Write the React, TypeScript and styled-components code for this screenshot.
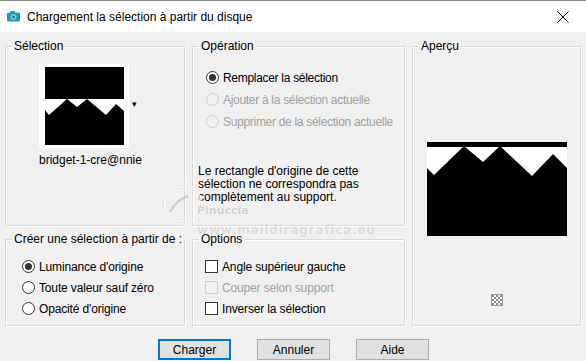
import React from 'react'
import styled, { createGlobalStyle, css } from 'styled-components'

const GlobalStyle = createGlobalStyle`
  html, body {
    margin: 0;
    padding: 0;
    background: #f0f0f0;
  }
  body {
    font-family: 'Liberation Sans', Arial, sans-serif;
    font-size: 12px;
    color: #000;
  }
`

export default function App() {
  return (
    <>
      <GlobalStyle />
      <Window>
        <TitleBar>
          <TitleIcon />
          <TitleText>Chargement la sélection à partir du disque</TitleText>
          <CloseButton>
            <svg width="12" height="12" viewBox="0 0 12 12">
              <path d="M0.5 0.5 L11.5 11.5 M11.5 0.5 L0.5 11.5" stroke="#000" strokeWidth="1" />
            </svg>
          </CloseButton>
        </TitleBar>

        <Body>
          <Groups>
            <Group>
              <Legend>Sélection</Legend>
              <SelectionContent>
                <ThumbRow>
                  <Thumb />
                  <DropArrow>▾</DropArrow>
                </ThumbRow>
                <ThumbName>bridget-1-cre@nnie</ThumbName>
              </SelectionContent>
            </Group>

            <Group>
              <Legend>Opération</Legend>
              <OptionList $left={13} $top={24} $gap={9} $tight>
                <Radio checked label="Remplacer la sélection" />
                <Radio disabled label="Ajouter à la sélection actuelle" />
                <Radio disabled label="Supprimer de la sélection actuelle" />
              </OptionList>
              <Note>
                Le rectangle d'origine de cette
                <br />
                sélection ne correspondra pas
                <br />
                complètement au support.
              </Note>
            </Group>

            <PreviewGroup>
              <Legend>Aperçu</Legend>
              <PreviewArea>
                <Preview />
              </PreviewArea>
              <CheckerIcon />
            </PreviewGroup>

            <Group>
              <Legend>Créer une sélection à partir de :</Legend>
              <OptionList $left={16} $top={20} $gap={8}>
                <Radio checked label="Luminance d'origine" />
                <Radio label="Toute valeur sauf zéro" />
                <Radio label="Opacité d'origine" />
              </OptionList>
            </Group>

            <Group>
              <Legend>Options</Legend>
              <OptionList $left={12} $top={20} $gap={8}>
                <Check label="Angle supérieur gauche" />
                <Check disabled label="Couper selon support" />
                <Check label="Inverser la sélection" />
              </OptionList>
            </Group>
          </Groups>

          <Buttons>
            <Button $default>Charger</Button>
            <Button>Annuler</Button>
            <Button>Aide</Button>
          </Buttons>
        </Body>

        <Watermark>
          <WatermarkLogo />
          <WatermarkName>Pinuccia</WatermarkName>
          <WatermarkSite>www.maildiragrafica.eu</WatermarkSite>
        </Watermark>
      </Window>
    </>
  )
}

const Radio = ({ label, checked, disabled }: { label: string; checked?: boolean; disabled?: boolean }) => (
  <OptionRow $disabled={disabled}>
    <RadioDot $checked={checked} $disabled={disabled} />
    <span>{label}</span>
  </OptionRow>
)

const Check = ({ label, disabled }: { label: string; disabled?: boolean }) => (
  <OptionRow $disabled={disabled}>
    <CheckBox $disabled={disabled} />
    <span>{label}</span>
  </OptionRow>
)

const TitleIcon = () => (
  <svg width="13" height="11" viewBox="0 0 13 11">
    <rect x="0" y="1.5" width="13" height="9" rx="1.5" fill="#1c9fb8" />
    <rect x="3" y="0" width="5" height="3" rx="1" fill="#1c9fb8" />
    <circle cx="6.5" cy="6" r="2.8" fill="#7fd6e6" />
    <circle cx="6.5" cy="6" r="1.5" fill="#1a7f93" />
  </svg>
)

const Thumb = () => (
  <svg width="90" height="84" viewBox="0 0 90 84">
    <rect width="90" height="84" fill="#fff" />
    <rect x="6" y="3" width="79" height="32" fill="#000" />
    <polygon
      points="6,46 10,51 28,35 38,43 48,35 67,51 77,40 85,47 85,81 6,81"
      fill="#000"
    />
  </svg>
)

const Preview = () => (
  <svg width="140" height="94" viewBox="0 0 140 94">
    <rect width="140" height="94" fill="#fff" />
    <rect x="0" y="0" width="140" height="5" fill="#000" />
    <polygon
      points="0,26 7,33 37,4 56,20 73,4 105,34 126,12 140,26 140,94 0,94"
      fill="#000"
    />
  </svg>
)

const CheckerIcon = () => (
  <CheckerBox>
    <svg width="12" height="12" viewBox="0 0 12 12">
      <rect x="0.5" y="0.5" width="11" height="11" fill="#fff" stroke="#9a9a9a" />
      {[0, 1, 2, 3, 4].map((r) =>
        [0, 1, 2, 3, 4].map((c) =>
          (r + c) % 2 === 0 ? <rect key={`${r}-${c}`} x={1 + c * 2} y={1 + r * 2} width="2" height="2" fill="#8a8a8a" /> : null
        )
      )}
    </svg>
  </CheckerBox>
)

const WatermarkLogo = () => (
  <LogoSvg width="44" height="44" viewBox="0 0 44 44">
    <circle cx="22" cy="22" r="19" fill="none" stroke="rgba(255,255,255,0.75)" strokeWidth="3" />
    <circle cx="22" cy="22" r="19" fill="none" stroke="rgba(150,150,150,0.3)" strokeWidth="1" />
    <path d="M10 30 Q16 18 28 14" fill="none" stroke="rgba(150,150,150,0.4)" strokeWidth="2" />
  </LogoSvg>
)

const Window = styled.div`
  position: relative;
  width: 586px;
  height: 361px;
  overflow: hidden;
  background: #f0f0f0;
`

const TitleBar = styled.div`
  display: flex;
  align-items: center;
  height: 31px;
  padding-left: 7px;
  background: #fff;
  border-top: 1px solid #8a8a8a;
`

const TitleText = styled.div`
  margin-left: 7px;
  font-size: 12px;
  color: #000;
`

const CloseButton = styled.div`
  margin-left: auto;
  width: 46px;
  display: flex;
  align-items: center;
  justify-content: center;
  padding-left: 3px;
`

const Body = styled.div`
  padding: 6px 6px 0 5px;
`

const Groups = styled.div`
  display: grid;
  grid-template-columns: 180px 213px 169px;
  grid-template-rows: 188px 95px;
  column-gap: 7px;
  row-gap: 5px;
`

const Group = styled.div`
  position: relative;
  margin-top: 8px;
  border: 1px solid #d9d9d9;
  box-shadow: inset 1px 1px 0 #fff, 1px 1px 0 #fff;
`

const PreviewGroup = styled(Group)`
  grid-column: 3;
  grid-row: 1 / span 2;
  display: flex;
  flex-direction: column;
  align-items: center;
`

const Legend = styled.div`
  position: absolute;
  top: -9px;
  left: 6px;
  padding: 0 2px;
  background: #f0f0f0;
  line-height: 16px;
  white-space: nowrap;
`

const SelectionContent = styled.div`
  display: flex;
  flex-direction: column;
  align-items: flex-start;
  padding: 17px 0 0 33px;
`

const ThumbRow = styled.div`
  display: flex;
  align-items: center;
  svg {
    display: block;
  }
`

const DropArrow = styled.span`
  font-size: 9px;
  margin-left: 3px;
  margin-top: -4px;
`

const ThumbName = styled.div`
  width: 90px;
  margin-top: 5px;
  text-align: center;
  white-space: nowrap;
`

const OptionList = styled.div<{ $left: number; $top: number; $gap: number; $tight?: boolean }>`
  display: flex;
  flex-direction: column;
  ${({ $left, $top, $gap }) => css`
    padding: ${$top}px 0 0 ${$left}px;
    gap: ${$gap}px;
  `}
  letter-spacing: ${({ $tight }) => ($tight ? '-0.3px' : '-0.15px')};
`

const OptionRow = styled.div<{ $disabled?: boolean }>`
  display: flex;
  align-items: center;
  gap: 4px;
  height: 13px;
  white-space: nowrap;
  color: ${({ $disabled }) => ($disabled ? '#a0a0a0' : '#000')};
`

const RadioDot = styled.span<{ $checked?: boolean; $disabled?: boolean }>`
  position: relative;
  box-sizing: border-box;
  width: 13px;
  height: 13px;
  flex: none;
  border-radius: 50%;
  border: 1px solid ${({ $disabled }) => ($disabled ? '#cccccc' : '#333')};
  background: ${({ $disabled }) => ($disabled ? '#f0f0f0' : '#fff')};
  ${({ $checked }) =>
    $checked &&
    css`
      &::after {
        content: '';
        position: absolute;
        left: 2px;
        top: 2px;
        width: 7px;
        height: 7px;
        border-radius: 50%;
        background: #333;
      }
    `}
`

const CheckBox = styled.span<{ $disabled?: boolean }>`
  box-sizing: border-box;
  width: 13px;
  height: 13px;
  flex: none;
  border: 1px solid ${({ $disabled }) => ($disabled ? '#cccccc' : '#333')};
  background: ${({ $disabled }) => ($disabled ? '#f0f0f0' : '#fff')};
`

const Note = styled.div`
  margin: 37px 0 0 5px;
  line-height: 13px;
`

const PreviewArea = styled.div`
  flex: 1;
  display: flex;
  align-items: center;
  padding-top: 36px;
  svg {
    display: block;
  }
`

const CheckerBox = styled.div`
  margin-bottom: 19px;
  line-height: 0;
`

const Buttons = styled.div`
  display: flex;
  justify-content: center;
  gap: 26px;
  margin-top: 13px;
  padding-left: 2px;
`

const Button = styled.div<{ $default?: boolean }>`
  box-sizing: border-box;
  width: 73px;
  height: 21px;
  display: flex;
  align-items: center;
  justify-content: center;
  background: #e1e1e1;
  border: 1px solid #adadad;
  ${({ $default }) =>
    $default &&
    css`
      border: 2px solid #0078d7;
    `}
`

const Watermark = styled.div`
  position: absolute;
  left: 160px;
  top: 182px;
  pointer-events: none;
`

const LogoSvg = styled.svg`
  position: absolute;
  left: 0;
  top: 0;
`

const WatermarkName = styled.div`
  position: absolute;
  left: 37px;
  top: 22px;
  font-family: 'DejaVu Sans', sans-serif;
  font-weight: bold;
  font-size: 11px;
  color: rgba(170, 170, 170, 0.5);
  text-shadow: 0 0 2px rgba(255, 255, 255, 0.9);
`

const WatermarkSite = styled.div`
  position: absolute;
  left: 37px;
  top: 41px;
  white-space: nowrap;
  font-family: 'DejaVu Sans', sans-serif;
  font-weight: bold;
  font-size: 12px;
  letter-spacing: 0.8px;
  color: rgba(170, 170, 170, 0.4);
  text-shadow: 0 0 2px rgba(255, 255, 255, 0.9);
`
